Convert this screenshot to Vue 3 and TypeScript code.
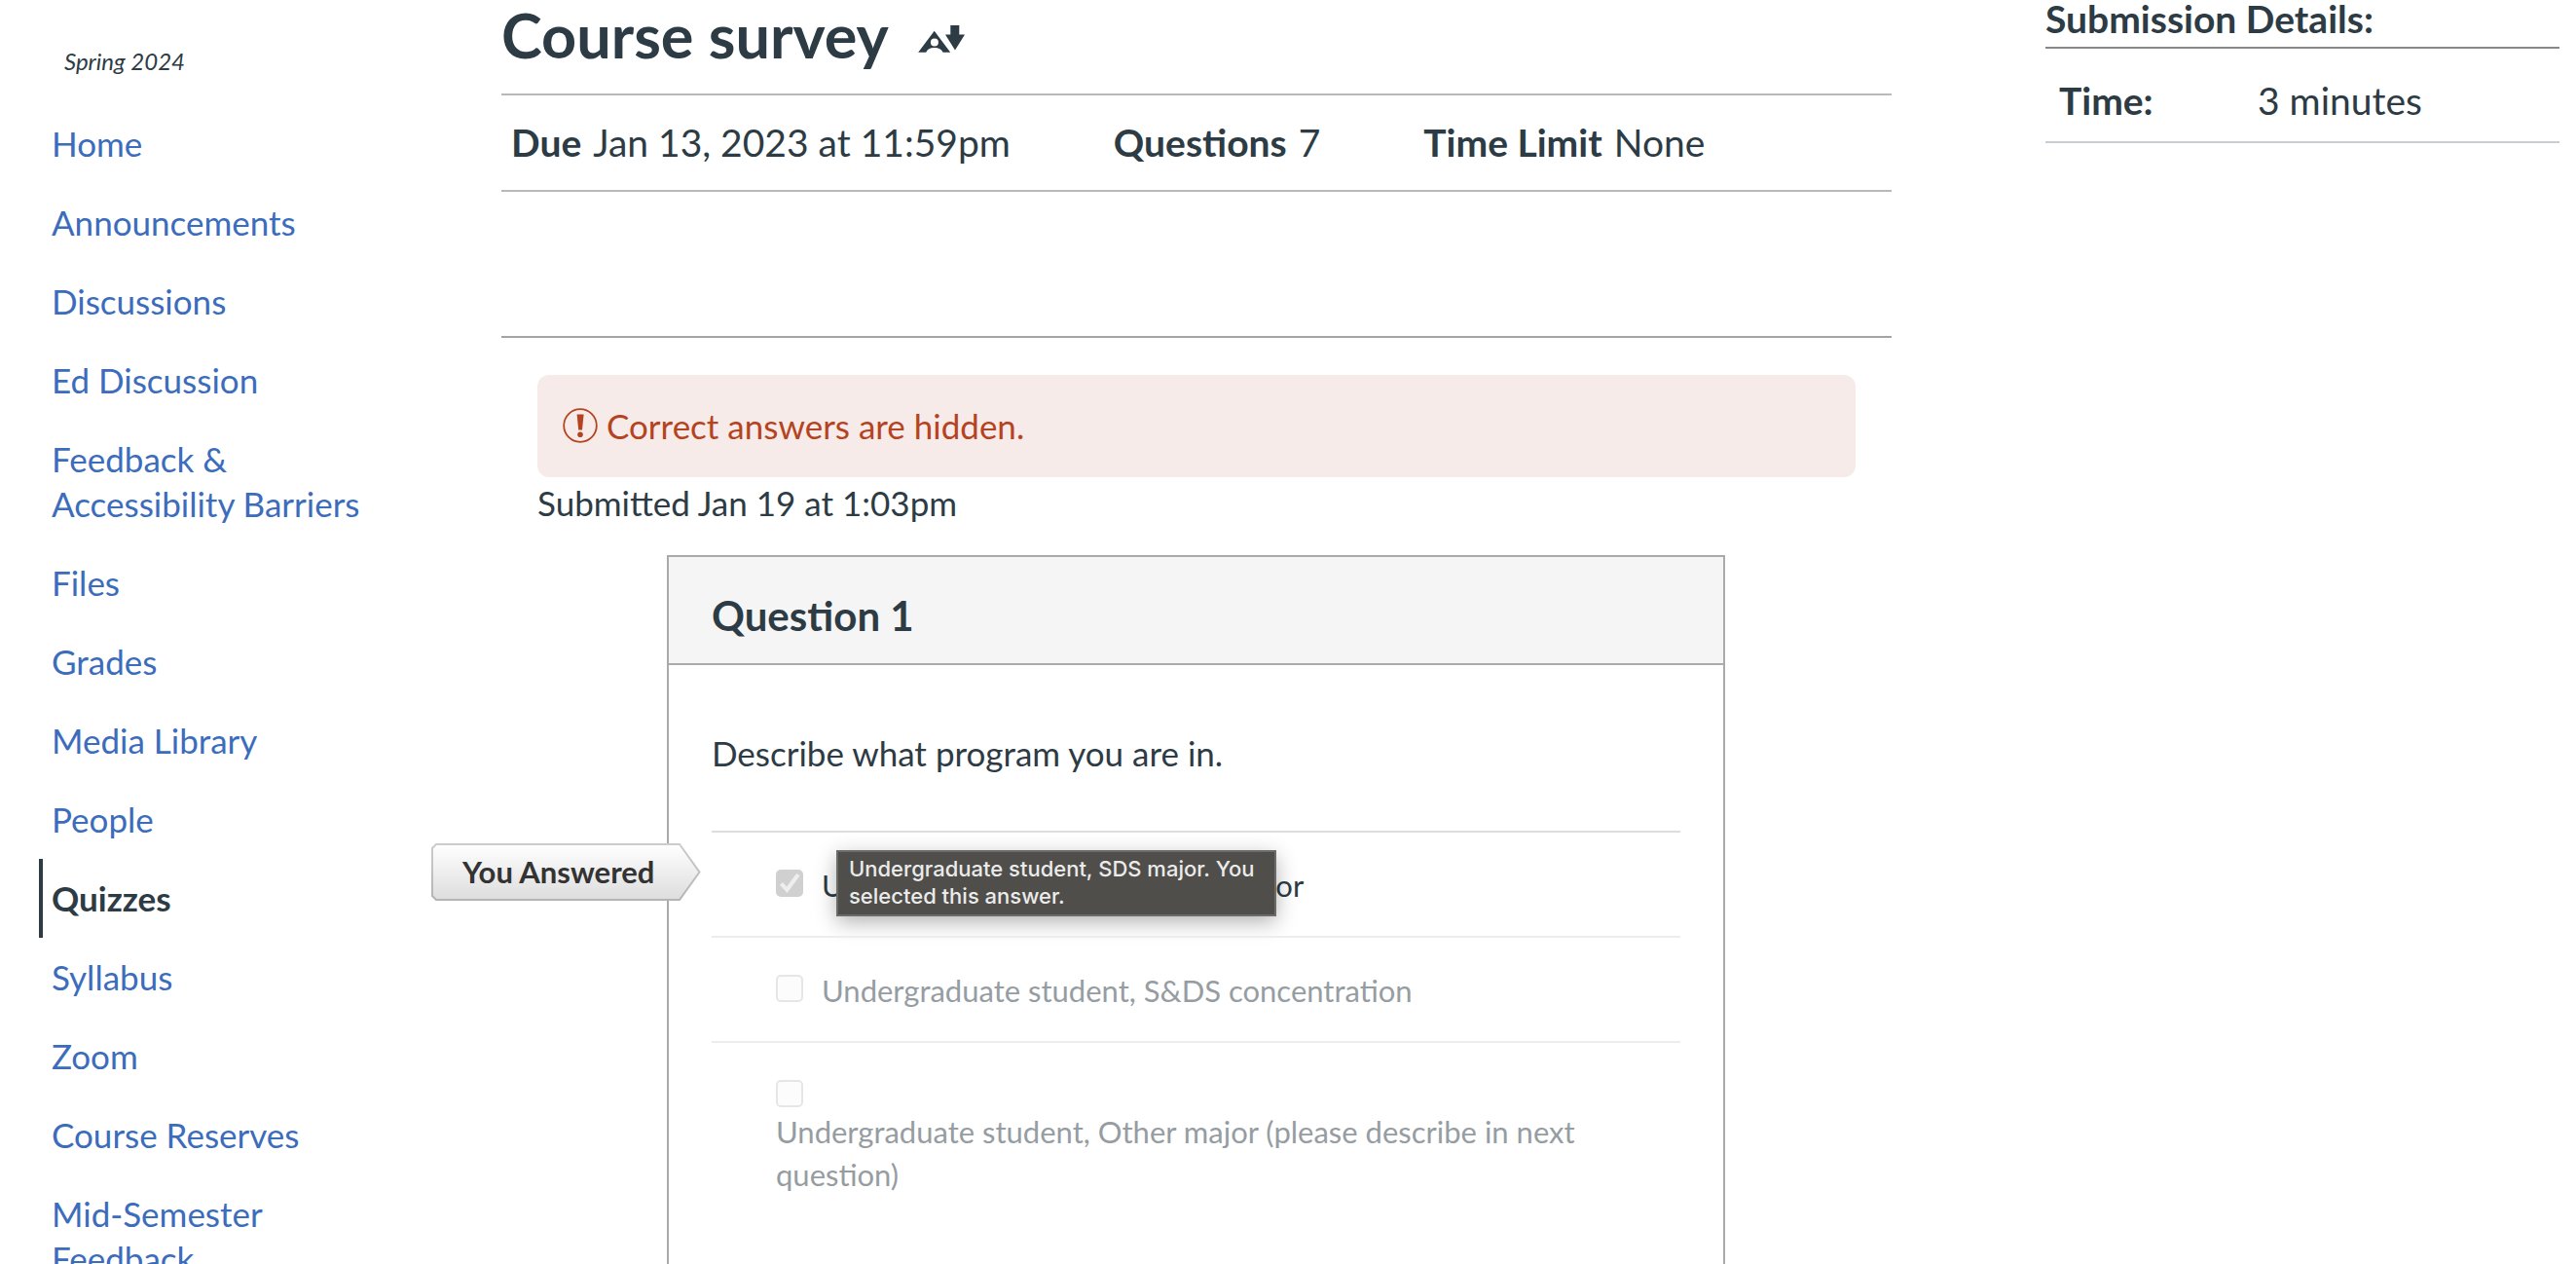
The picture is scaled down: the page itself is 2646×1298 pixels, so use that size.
<script setup lang="ts">
interface NavItem {
  label: string
  active?: boolean
}

interface Answer {
  id: string
  text: string
  hint?: string
  selected?: boolean
  stacked?: boolean
}

const navItems: NavItem[] = [
  { label: 'Home' },
  { label: 'Announcements' },
  { label: 'Discussions' },
  { label: 'Ed Discussion' },
  { label: 'Feedback & Accessibility Barriers' },
  { label: 'Files' },
  { label: 'Grades' },
  { label: 'Media Library' },
  { label: 'People' },
  { label: 'Quizzes', active: true },
  { label: 'Syllabus' },
  { label: 'Zoom' },
  { label: 'Course Reserves' },
  { label: 'Mid-Semester Feedback' },
]

const facts = [
  { label: 'Due', value: 'Jan 13, 2023 at 11:59pm' },
  { label: 'Questions', value: '7' },
  { label: 'Time Limit', value: 'None' },
]

const answers: Answer[] = [
  {
    id: 'answer-major',
    text: 'Undergraduate student, S&DS major',
    hint: 'Undergraduate student, SDS major. You selected this answer.',
    selected: true,
  },
  { id: 'answer-concentration', text: 'Undergraduate student, S&DS concentration' },
  {
    id: 'answer-other',
    text: 'Undergraduate student, Other major (please describe in next question)',
    stacked: true,
  },
]
</script>

<template>
  <div class="page">
    <nav class="course-nav" aria-label="Course">
      <p class="term">Spring 2024</p>
      <ul class="nav-list">
        <li v-for="item in navItems" :key="item.label">
          <a
            href="#"
            class="nav-link"
            :class="{ active: item.active }"
            :aria-current="item.active ? 'page' : undefined"
          >{{ item.label }}</a>
        </li>
      </ul>
    </nav>

    <main class="content">
      <header class="title-row">
        <h1>Course survey</h1>
        <svg class="format-icon" viewBox="0 0 48 29" aria-hidden="true">
          <path
            fill-rule="evenodd"
            d="M16.7 5.7 33.2 27.8H25.6C24.4 24.6 21.2 23 16.7 23S9.4 24.6 8.2 27.8H.2ZM16.9 13.6a4 4 0 1 0 0 8 4 4 0 0 0 0-8Z"
          />
          <path d="M33.3 0h9v9.4H48L38 25.4 28 9.4h5.3Z" />
        </svg>
      </header>

      <dl class="facts">
        <div v-for="fact in facts" :key="fact.label" class="fact">
          <dt>{{ fact.label }}</dt>
          <dd>{{ fact.value }}</dd>
        </div>
      </dl>

      <section class="submission">
        <div class="alert" role="status">
          <svg class="alert-icon" viewBox="0 0 36 36" aria-hidden="true">
            <circle cx="18" cy="18" r="16.8" fill="none" stroke="currentColor" stroke-width="1.8" />
            <path fill="currentColor" d="M14.6 6.5h7L20 22.4h-3.8Z" />
            <circle cx="18" cy="27.2" r="2.8" fill="currentColor" />
          </svg>
          <span>Correct answers are hidden.</span>
        </div>
        <p class="submitted">Submitted Jan 19 at 1:03pm</p>

        <article class="question">
          <h2>Question 1</h2>
          <div class="question-body">
            <p class="prompt">Describe what program you are in.</p>
            <ul class="answers">
              <li
                v-for="answer in answers"
                :key="answer.id"
                class="answer"
                :class="{ selected: answer.selected, stacked: answer.stacked }"
              >
                <input :id="answer.id" type="checkbox" :checked="answer.selected" disabled />
                <label :for="answer.id">{{ answer.text }}</label>
                <div v-if="answer.selected" class="answer-flag">
                  <svg viewBox="0 0 277 59" aria-hidden="true">
                    <defs>
                      <linearGradient id="flag-fill" x1="0" y1="0" x2="0" y2="1">
                        <stop offset="0" stop-color="#ffffff" />
                        <stop offset="1" stop-color="#dddddd" />
                      </linearGradient>
                      <linearGradient id="flag-edge" x1="0" y1="0" x2="0" y2="1">
                        <stop offset="0" stop-color="#cccccc" />
                        <stop offset="1" stop-color="#b4b4b4" />
                      </linearGradient>
                    </defs>
                    <path
                      d="M5 1H255L275.5 29.5 255 58H5L1 54V5Z"
                      fill="url(#flag-fill)"
                      stroke="url(#flag-edge)"
                      stroke-width="2"
                    />
                  </svg>
                  <span>You Answered</span>
                </div>
                <div v-if="answer.hint" class="tooltip" role="tooltip">{{ answer.hint }}</div>
              </li>
            </ul>
          </div>
        </article>
      </section>
    </main>

    <aside class="details">
      <h2>Submission Details:</h2>
      <table>
        <tbody>
          <tr>
            <th scope="row">Time:</th>
            <td>3 minutes</td>
          </tr>
        </tbody>
      </table>
    </aside>
  </div>
</template>

<style>
body {
  margin: 0;
  background: #fff;
}
</style>

<style scoped>
.page {
  display: flex;
  height: 100vh;
  overflow: hidden;
  font-family: Lato, "Open Sans", sans-serif;
  font-size: 35px;
  line-height: 46px;
  color: #2d3b45;
}

h1,
h2,
p,
ul,
dl,
dd {
  margin: 0;
  padding: 0;
}

ul {
  list-style: none;
}

/* Course navigation */
.course-nav {
  flex: none;
  box-sizing: border-box;
  width: 515px;
  padding: 48px 125px 0 40px;
}

.term {
  padding: 0 26px 29px;
  font-size: 24px;
  line-height: 30px;
  font-style: italic;
}

.nav-link {
  display: block;
  padding: 17px 9px 18px;
  border-left: 4px solid transparent;
  color: #3c6cbc;
  text-decoration: none;
}

.nav-link.active {
  border-left-color: #2d3b45;
  color: #2d3b45;
  font-weight: 700;
}

/* Quiz heading */
.content {
  flex: 1;
  min-width: 0;
}

.title-row {
  display: flex;
  align-items: flex-start;
  gap: 30px;
  padding-bottom: 24px;
  border-bottom: 2px solid #b9b9b9;
}

h1 {
  font-size: 63px;
  line-height: 72px;
  font-weight: 700;
}

.format-icon {
  width: 48px;
  height: 29px;
  margin-top: 26px;
  fill: #2d3b45;
}

.facts {
  display: flex;
  gap: 106px;
  padding: 24px 10px 25px;
  border-bottom: 2px solid #b9b9b9;
  font-size: 39px;
  line-height: 48px;
}

.fact {
  display: flex;
  gap: 12px;
}

dt {
  font-weight: 700;
}

/* Submission */
.submission {
  margin-top: 148px;
  padding: 38px 37px 0;
  border-top: 2px solid #a4a4a4;
}

.alert {
  display: flex;
  align-items: center;
  gap: 9px;
  padding: 29px 26px 30px;
  border-radius: 12px;
  background: #f7ebe9;
  color: #b5431f;
}

.alert-icon {
  flex: none;
  width: 36px;
  height: 36px;
}

.submitted {
  padding: 3px 0 31px;
}

.question {
  margin: 0 134px 0 133px;
  border: 2px solid #aaa;
}

.question h2 {
  padding: 35px 44px 24px;
  border-bottom: 2px solid #aaa;
  background: #f5f5f5;
  font-size: 42px;
  line-height: 50px;
}

.question-body {
  padding: 67px 44px 90px;
}

.prompt {
  padding-bottom: 57px;
}

.answer {
  position: relative;
  display: flex;
  align-items: flex-start;
  gap: 19px;
  padding: 32px 66px 30px;
  border-top: 2px solid #ededed;
  font-size: 31px;
  line-height: 44px;
}

.answer:first-child {
  border-top-color: #ddd;
}

.answer.stacked {
  flex-direction: column;
  gap: 3px;
}

.answer label {
  color: #969da2;
}

.answer.selected label {
  color: #2d3b45;
}

.answer input {
  appearance: none;
  flex: none;
  box-sizing: border-box;
  width: 28px;
  height: 28px;
  margin: 6px 0 0;
  border: 2px solid #e6e6e6;
  border-radius: 5px;
  background: #fcfcfc;
}

.answer input:checked {
  border-color: #d0d0d0;
  background: #d0d0d0;
}

.answer input:checked::before {
  content: "";
  display: block;
  height: 24px;
  background: #eee;
  clip-path: polygon(8% 57%, 21% 46%, 38% 65%, 80% 8%, 94% 18%, 40% 92%);
}

.answer-flag {
  position: absolute;
  top: 11px;
  left: -288px;
  width: 277px;
  height: 59px;
}

.answer-flag svg {
  display: block;
  width: 100%;
  height: 100%;
}

.answer-flag span {
  position: absolute;
  inset: 0 0 0 32px;
  color: #333;
  font-size: 31px;
  line-height: 58px;
  font-weight: 700;
}

.tooltip {
  position: absolute;
  top: 18px;
  left: 128px;
  box-sizing: border-box;
  width: 452px;
  padding: 3px 11px 5px;
  border: 2px solid #6b6b69;
  background: #4f4e4b;
  box-shadow: 0 6px 20px rgba(0, 0, 0, 0.3);
  color: #ebebea;
  font-family: Inter, Roboto, sans-serif;
  font-size: 22px;
  line-height: 28px;
  font-weight: 500;
}

/* Submission details */
.details {
  flex: none;
  box-sizing: border-box;
  width: 703px;
  padding: 0 17px 0 158px;
  font-size: 39px;
  line-height: 48px;
}

.details h2 {
  padding-bottom: 10px;
  border-bottom: 2px solid #888;
  font-size: 39px;
  line-height: 38px;
}

.details table {
  width: 100%;
  border-collapse: collapse;
}

.details tr {
  border-bottom: 2px solid #c7cdd1;
}

.details th,
.details td {
  padding: 29px 14px 18px;
  text-align: left;
}

.details th {
  width: 176px;
}
</style>
